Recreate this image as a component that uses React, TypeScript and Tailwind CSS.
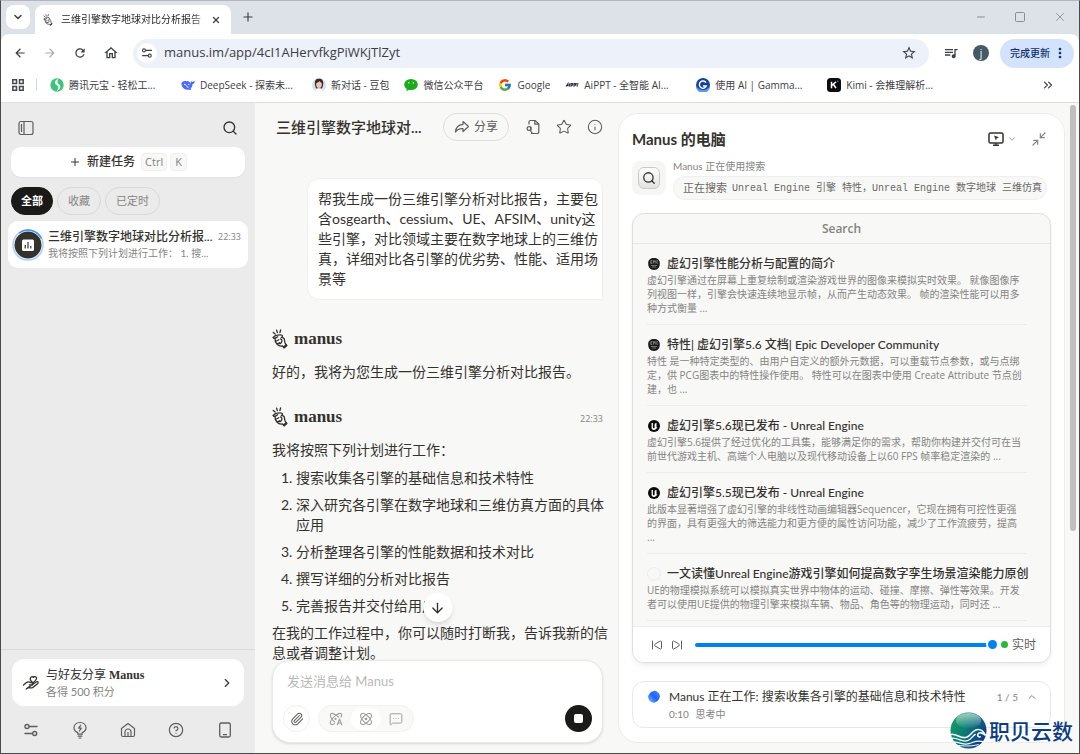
import { ReactNode, useState } from 'react';
import {
  ArrowDown,
  ChevronDown,
  ChevronRight,
  ChevronUp,
  ChevronsRight,
  CircleHelp,
  Info,
  MessageSquareMore,
  Minimize2,
  Minus,
  Paperclip,
  Plus,
  Search,
  SkipBack,
  SkipForward,
  Square,
  Star,
  X
} from 'lucide-react';
import {
  MdArrowBack,
  MdArrowForward,
  MdMoreVert,
  MdOutlineHome,
  MdQueueMusic,
  MdRefresh,
  MdStarBorder
} from 'react-icons/md';
import { FcGoogle } from 'react-icons/fc';

interface Bookmark {
  label: string;
  icon: ReactNode;
  long?: boolean;
}

interface Result {
  title: string;
  body: string[];
  icon: ReactNode;
}

function ManusHand({ size }: { size: string }) {
  return (
    <svg
      viewBox="0 0 16 20"
      className={size}
      fill="none"
      stroke="currentColor"
      strokeWidth="1.3"
      strokeLinecap="round"
      strokeLinejoin="round"
    >
      <path d="M1.2 3.4l2 1.6M4.6 1.2l.8 2.4M8.6 1l-.7 2.5" />
      <path d="M1.2 8.4c1-1.2 2.6-2 4.2-2.2 1.8-.3 3.6-.5 4.6.1 1 .8.4 1.8-.6 2 1.6 0 2.8.8 3 2.2.1 1.7.4 3.2 1 4.3l1.5 1.6-2.6 2.4-1.7-1.8c-2 .3-4.2-.2-5.4-1.6-1.7-1.9-2.4-4.4-2.2-6.2" />
      <path d="M1.3 8.500c.2 1 1.3 1.200 2.200.6l2.200-1.300M3.600 12c1 .4 2-.5 3.200-1.300M5 14.600c.9.3 1.600-.2 2.600-.9M8.600 9.800c1.500.6 1.700 2.600.6 3.900-.8.9-2 1.200-3 .7" />
      <path d="M11.800 18.300l2.300-2.200" strokeWidth="2" />
    </svg>
  );
}

function PanelIcon() {
  return (
    <svg viewBox="0 0 16 16" className="size-4" fill="none" stroke="currentColor" strokeWidth="1.2">
      <rect x="1" y="1.5" width="14" height="13" rx="2" />
      <path d="M6 1.5v13M3.5 4v8" />
    </svg>
  );
}

function ShareIcon() {
  return (
    <svg viewBox="0 0 16 16" className="size-4" fill="none" stroke="currentColor" strokeWidth="1.2" strokeLinejoin="round">
      <path d="M9 2.500l5.500 5-5.500 5V9.700C5.500 9.500 3.200 10.600 1.500 13c.2-4.500 2.900-7.200 7.500-7.700z" />
    </svg>
  );
}

function FileSearchIcon() {
  return (
    <svg viewBox="0 0 16 16" className="size-4" fill="none" stroke="currentColor" strokeWidth="1.2" strokeLinejoin="round">
      <path d="M4 5.500V3a1.500 1.500 0 011.500-1.500H10L13.800 5v8a1.500 1.500 0 01-1.500 1.500H6" />
      <path d="M9.800 1.500v3.700h4" />
      <circle cx="4" cy="9.5" r="1.900" />
      <path d="M5.900 7.500v5.500M5.900 13.500h1.600" />
    </svg>
  );
}

function MonitorIcon() {
  return (
    <svg viewBox="0 0 18 16" className="h-4 w-[18px]" fill="none" stroke="currentColor" strokeWidth="1.5" strokeLinejoin="round">
      <rect x="2" y="2" width="14" height="10" rx="1.5" />
      <path d="M9 12v2M6 14.300h6" />
      <path d="M7 4.500l5 1.800-2.200.9-.9 2.200z" fill="currentColor" stroke="none" />
    </svg>
  );
}

function HandHeartIcon() {
  return (
    <svg viewBox="0 0 18 18" className="size-[18px]" fill="none" stroke="currentColor" strokeWidth="1.3" strokeLinejoin="round" strokeLinecap="round">
      <path d="M8.500 3.800c.8-1.500 2.300-1.300 2.900-.4.900-1.100 2.600-1 3.100.3.500 1.600-1 3-3.500 5C8.800 7.200 7.700 5.400 8.500 3.800z" />
      <path d="M1.500 11l3-2.500c1-.8 2.100-.8 3.200-.3l2.600 1c1 .5.700 1.900-.4 1.800l-2.600-.2M10.500 10.500l4-2.700c1.300-.7 2.300.6 1.300 1.600l-4.300 3.700c-.7.6-1.500.8-2.400.7l-3-.3-1.800 1.600z" />
    </svg>
  );
}

function SlidersIcon({ className }: { className: string }) {
  return (
    <svg viewBox="0 0 16 16" className={className} fill="none" stroke="currentColor" strokeWidth="1.4" strokeLinecap="round">
      <circle cx="4" cy="4.5" r="2" />
      <path d="M6.500 4.500H14M2 11.500h7" />
      <circle cx="11.7" cy="11.5" r="2" />
    </svg>
  );
}

function BulbIcon() {
  return (
    <svg viewBox="0 0 16 18" className="h-[18px] w-4" fill="none" stroke="currentColor" strokeWidth="1.2" strokeLinecap="round" strokeLinejoin="round">
      <path d="M5.800 13.200v-1.600C3.500 10.700 2 9 2 6.800 2 3.600 4.700 1.500 8 1.500s6 2.100 6 5.300c0 2.200-1.500 3.900-3.800 4.800v1.600z" />
      <path d="M8.600 4.300L6.700 7.200h2.600L7.400 10M6.200 15.200h3.600M7 17h2" />
    </svg>
  );
}

function HomeIcon() {
  return (
    <svg viewBox="0 0 16 16" className="size-4" fill="none" stroke="currentColor" strokeWidth="1.2" strokeLinejoin="round">
      <path d="M1.500 6.500L8 1.500l6.500 5V13a1.500 1.500 0 01-1.500 1.500H3A1.500 1.500 0 011.500 13z" />
      <path d="M5 14.500V10a3 3 0 016 0v4.500M8 10v4.500" />
    </svg>
  );
}

function TabletIcon() {
  return (
    <svg viewBox="0 0 16 16" className="size-4" fill="none" stroke="currentColor" strokeWidth="1.3" strokeLinecap="round">
      <rect x="2.7" y="1" width="10.6" height="14" rx="1.5" />
      <path d="M6.500 12.700h3" />
    </svg>
  );
}

function AtomIcon({ auto }: { auto?: boolean }) {
  return (
    <svg viewBox="0 0 16 16" className="size-3.5" fill="none" stroke="currentColor" strokeWidth="1.2" strokeLinecap="round" strokeLinejoin="round">
      {auto ? (
        <>
          <path d="M8 3.600C5.500 1.800 3 1.200 2 2.200s-.4 3.300 1.400 5.800M8 3.600c2.500-1.800 5-2.400 6-1.400.6.700.5 2.100-.2 3.600M3.400 8c-1.800 2.500-2.400 4.800-1.400 5.800.8.800 2.500.6 4.300-.5M3.400 8c1.200-1.700 2.800-3.300 4.600-4.400 1 .6 1.900 1.300 2.800 2.100M3.400 8c.8 1.200 1.800 2.400 3 3.400" />
          <circle cx="7.5" cy="7.8" r=".7" fill="currentColor" />
          <path d="M9.500 14.500l2.500-6.500 2.500 6.500M10.400 12.500h3.200" />
        </>
      ) : (
        <>
          <ellipse cx="8" cy="8" rx="3.8" ry="8" transform="rotate(45 8 8)" />
          <ellipse cx="8" cy="8" rx="3.8" ry="8" transform="rotate(-45 8 8)" />
          <circle cx="8" cy="8" r=".9" fill="currentColor" />
        </>
      )}
    </svg>
  );
}

function EpicIcon() {
  return (
    <svg viewBox="0 0 12 12" className="size-3">
      <path d="M6 0C9.500 0 11.700 1.500 11.800 5 12 9 10 12 6 12S0 9 .2 5C.3 1.500 2.500 0 6 0z" fill="#1c1c1c" />
      <path d="M2.800 2.500h1.600M2.800 2.500v3M2.800 4h1.300M2.800 5.500h1.600M5.500 5.500v-3h1v1.500h-1M7.700 2.500v3M9.800 2.700H8.900v2.600h.9M3 7.500h6M4 9h4" stroke="#aaa" strokeWidth=".6" fill="none" />
    </svg>
  );
}

function UnrealIcon() {
  return (
    <svg viewBox="0 0 12 12" className="size-3">
      <circle cx="6" cy="6" r="6" fill="#0b0b0b" />
      <path d="M3 3.700L4.900 2.800v4.500c0 .7.300 1 .8 1 .5 0 .9-.3.9-.9V3.800l1.900-1v4.800l.9-.3C8.900 8.800 7.500 9.900 5.900 9.900 4.300 9.900 3.600 9 3.600 7.700V4.200z" fill="#fff" />
    </svg>
  );
}

const bookmarks: Bookmark[] = [
  {
    label: '腾讯元宝 - 轻松工...',
    long: true,
    icon: (
      <svg viewBox="0 0 14 14" className="size-3.5">
        <circle cx="7" cy="7" r="6.7" fill="#3cc57a" />
        <path d="M8.500.500C4 3 4.200 5.500 7 7.300c2 1.300 1.600 3.500-.5 6.200 4.200-2.500 5-5.700 2.500-7.300C7 5 7 3 8.500.500z" fill="#fff" />
      </svg>
    )
  },
  {
    label: 'DeepSeek - 探索未...',
    long: true,
    icon: (
      <svg viewBox="0 0 14 14" className="size-3.5">
        <path d="M.5 5C1.500 3 3.500 2.500 5.500 3.200L7 3c1 .6 2 1.200 2.500 2.400.6-.6.2-1.700.4-2.700.8 1 1.400 1.300 2.100 1.100.6-.2 1-.7 1.700-.7 0 1.800-.7 2.700-2.200 3.100-.2 2-1 3.600-2.100 4.500l1 1c-1 .4-2 .2-2.700-.2-3.500 1.100-7.700-2-7.200-6.500z" fill="#4d6bfe" />
        <path d="M3 6.200c2 0 3 2.600 4.400 3.800M7.200 6.300l1.200.5" stroke="#fff" strokeWidth="1" fill="none" />
      </svg>
    )
  },
  {
    label: '新对话 - 豆包',
    icon: (
      <svg viewBox="0 0 14 14" className="size-3.5">
        <circle cx="7" cy="7" r="7" fill="#cfe3f7" />
        <path d="M3 7C2.200 2.500 4 .800 7 .800s5 1.700 4 6.700l-1 3H4z" fill="#3b2a2a" />
        <ellipse cx="7" cy="6.5" rx="2.8" ry="3.5" fill="#f3c6a8" />
        <path d="M3.500 13c.3-2 1.500-2.700 3.500-2.700s3.200.7 3.500 2.700Q7 15 3.500 13z" fill="#fff" />
        <path d="M4 4.800C5.500 4.800 7 4 7.500 3c.6 1 1.500 1.600 2.500 1.800L9.500 2h-5z" fill="#3b2a2a" />
      </svg>
    )
  },
  {
    label: '微信公众平台',
    icon: (
      <svg viewBox="0 0 14 14" className="size-3.5">
        <ellipse cx="7" cy="6.5" rx="6.8" ry="5.6" fill="#1aad19" />
        <path d="M3 10.500l-.8 2.800 3.300-1.800z" fill="#1aad19" />
        <circle cx="4.7" cy="4.8" r=".8" fill="#fff" />
        <circle cx="9.3" cy="4.8" r=".8" fill="#fff" />
      </svg>
    )
  },
  { label: 'Google', icon: <FcGoogle className="size-3.5" /> },
  {
    label: 'AiPPT - 全智能 AI...',
    long: true,
    icon: (
      <svg viewBox="0 0 14 14" className="size-3.5" fill="none" stroke="#33304a" strokeWidth="1.1">
        <path d="M1 8.500l2-3v3M1.800 7.500h1M4.500 5.500v3M6 8.700V5.500h1.500v1.600H6M9 8.700V5.500h1.500v1.600H9M11 5.700h2.500M12.200 5.700v3" />
      </svg>
    )
  },
  {
    label: '使用 AI | Gamma...',
    long: true,
    icon: (
      <svg viewBox="0 0 14 14" className="size-3.5">
        <circle cx="7" cy="7" r="7" fill="#14429c" />
        <path d="M0 8a7 7 0 0014 0q-3 4-7 4T0 8z" fill="#5b9bea" />
        <path d="M10 4.700A3.600 3.600 0 1010.300 8H7" stroke="#fff" strokeWidth="1.4" fill="none" />
      </svg>
    )
  },
  {
    label: 'Kimi - 会推理解析...',
    long: true,
    icon: (
      <svg viewBox="0 0 14 14" className="size-3.5">
        <rect width="14" height="14" rx="3.5" fill="#0c0c0c" />
        <path d="M4.500 3.800v6.400M9 3.800L5 7.200M6.500 6.500L9 10.200" stroke="#fff" strokeWidth="1.5" fill="none" />
        <circle cx="10.8" cy="3.3" r=".8" fill="#2b7fff" />
      </svg>
    )
  }
];

const filters = ['全部', '收藏', '已定时'];

const steps = [
  ['搜索收集各引擎的基础信息和技术特性'],
  ['深入研究各引擎在数字地球和三维仿真方面的具体', '应用'],
  ['分析整理各引擎的性能数据和技术对比'],
  ['撰写详细的分析对比报告'],
  ['完善报告并交付给用户']
];

const results: Result[] = [
  {
    title: '虚幻引擎性能分析与配置的简介',
    body: [
      '虚幻引擎通过在屏幕上重复绘制或渲染游戏世界的图像来模拟实时效果。 就像图像序',
      '列视图一样，引擎会快速连续地显示帧，从而产生动态效果。 帧的渲染性能可以用多',
      '种方式衡量 ...'
    ],
    icon: <EpicIcon />
  },
  {
    title: '特性| 虚幻引擎5.6 文档| Epic Developer Community',
    body: [
      '特性 是一种特定类型的、由用户自定义的额外元数据，可以重载节点参数，或与点绑',
      '定，供 PCG图表中的特性操作使用。 特性可以在图表中使用 Create Attribute 节点创',
      '建，也 ...'
    ],
    icon: <EpicIcon />
  },
  {
    title: '虚幻引擎5.6现已发布 - Unreal Engine',
    body: [
      '虚幻引擎5.6提供了经过优化的工具集，能够满足你的需求，帮助你构建并交付可在当',
      '前世代游戏主机、高端个人电脑以及现代移动设备上以60 FPS 帧率稳定渲染的 ...'
    ],
    icon: <UnrealIcon />
  },
  {
    title: '虚幻引擎5.5现已发布 - Unreal Engine',
    body: [
      '此版本显著增强了虚幻引擎的非线性动画编辑器Sequencer，它现在拥有可控性更强',
      '的界面，具有更强大的筛选能力和更方便的属性访问功能，减少了工作流疲劳，提高',
      '...'
    ],
    icon: <UnrealIcon />
  },
  {
    title: '一文读懂Unreal Engine游戏引擎如何提高数字孪生场景渲染能力原创',
    body: [
      'UE的物理模拟系统可以模拟真实世界中物体的运动、碰撞、摩擦、弹性等效果。开发',
      '者可以使用UE提供的物理引擎来模拟车辆、物品、角色等的物理运动，同时还 ...'
    ],
    icon: <span className="size-3.5 rounded-full border border-[#ececf2]" />
  }
];

function Lines({ lines }: { lines: string[] }) {
  return (
    <>
      {lines.map(line => (
        <span key={line} className="block whitespace-nowrap">
          {line}
        </span>
      ))}
    </>
  );
}

function BrowserBar() {
  return (
    <header className="shrink-0 border-b border-[#dedede] bg-[#dde1e8] font-[Open_Sans,Noto_Sans_CJK_SC,sans-serif] text-[#3c4043]">
      <div className="flex h-[33px] items-end">
        <button aria-label="搜索标签页" className="mb-[5px] ml-[5px] flex size-6 items-center justify-center rounded-lg bg-white">
          <ChevronDown className="size-3" strokeWidth={3} />
        </button>
        <div className="ml-[5px] flex h-[29px] w-[196px] items-center rounded-t-lg bg-white px-2">
          <ManusHand size="mr-2 h-3 w-2.5" />
          <span className="flex-1 bg-linear-to-r from-[#1f1f1f] from-90% to-[#bbbbbb] bg-clip-text text-[10px] whitespace-nowrap text-transparent">
            三维引擎数字地球对比分析报告
          </span>
          <button aria-label="关闭标签页" className="ml-1 p-0.5">
            <X className="size-2.5" strokeWidth={3} />
          </button>
        </div>
        <button aria-label="新标签页" className="mb-2.5 ml-2.5">
          <Plus className="size-3.5" strokeWidth={2} />
        </button>
        <div className="mr-3 mb-2.5 ml-auto flex items-center gap-[27px] text-[#8a8d92]">
          <button aria-label="最小化"><Minus className="size-3" strokeWidth={2} /></button>
          <button aria-label="最大化"><Square className="size-3" strokeWidth={2} /></button>
          <button aria-label="关闭"><X className="size-3.5" strokeWidth={1.5} /></button>
        </div>
      </div>
      <div className="flex h-[38px] items-center rounded-t-lg bg-white pr-[5px] pl-3">
        <div className="flex items-center gap-4">
          <button aria-label="后退"><MdArrowBack className="size-3.5" /></button>
          <button aria-label="前进"><MdArrowForward className="size-3.5 text-[#a9acb0]" /></button>
          <button aria-label="刷新"><MdRefresh className="size-3.5" /></button>
          <button aria-label="主页"><MdOutlineHome className="size-4" /></button>
        </div>
        <div className="mr-3.5 ml-3.5 flex h-[29px] flex-1 items-center rounded-full bg-[#ecf1fa] pr-3 pl-1">
          <span className="flex size-5 items-center justify-center rounded-full bg-white">
            <SlidersIcon className="size-3" />
          </span>
          <input
            aria-label="地址栏"
            defaultValue="manus.im/app/4cI1AHervfkgPiWKjTlZyt"
            className="ml-[7px] min-w-0 flex-1 bg-transparent text-[13px] outline-none"
          />
          <button aria-label="收藏此页"><MdStarBorder className="size-4" /></button>
        </div>
        <button aria-label="媒体控件"><MdQueueMusic className="size-4" /></button>
        <span className="mr-[11px] ml-3.5 flex size-4 items-center justify-center rounded-full bg-[#455a64] text-[10px] leading-none text-white">j</span>
        <button className="flex h-[29px] items-center rounded-full bg-[#d3e3fd] pr-1.5 pl-2.5 text-[10px] font-medium text-[#10306e]">
          完成更新
          <MdMoreVert className="ml-0.5 size-4" />
        </button>
      </div>
      <nav className="flex h-[30px] items-center bg-white pr-6 pb-1 pl-[11px] text-[10px]">
        <svg viewBox="0 0 12 12" className="size-3" fill="none" stroke="#45484c" strokeWidth="1.5">
          <path d="M.8.800h3.700v3.700H.8zM7.500.800h3.700v3.700H7.500zM.8 7.500h3.700v3.700H.8zM7.500 7.500h3.700v3.700H7.500z" />
        </svg>
        <span className="mr-[13px] ml-3 h-3 w-px bg-[#c7d7f3]" />
        <div className="flex flex-1 gap-[15px] overflow-hidden">
          {bookmarks.map(item => (
            <a
              key={item.label}
              href="#"
              className={`flex shrink-0 items-center gap-[5px] whitespace-nowrap ${item.long ? 'w-[116px]' : ''}`}
            >
              <span className="shrink-0">{item.icon}</span>
              {item.label}
            </a>
          ))}
        </div>
        <button aria-label="更多书签"><ChevronsRight className="size-3.5" /></button>
      </nav>
    </header>
  );
}

function Sidebar() {
  const [active, setActive] = useState(filters[0]);

  return (
    <aside className="flex w-[254px] shrink-0 flex-col bg-[#ebebeb]">
      <div className="flex items-center justify-between px-[17px] pt-[17px] pb-[11px] text-[#5e5e5b]">
        <button aria-label="收起侧栏"><PanelIcon /></button>
        <button aria-label="搜索" className="text-[#34322d]"><Search className="size-4" strokeWidth={2} /></button>
      </div>
      <button className="mx-2.5 flex h-[30px] items-center justify-center rounded-[10px] bg-white text-xs font-medium text-[#34322d] shadow-xs">
        <Plus className="mr-1.5 size-3" strokeWidth={2} />
        新建任务
        <kbd className="ml-1.5 rounded-sm border border-[#efefef] bg-[#f8f8f7] px-[3px] font-[Open_Sans] text-[11px] leading-4 text-[#858481]">Ctrl</kbd>
        <kbd className="ml-[3px] rounded-sm border border-[#efefef] bg-[#f8f8f7] px-1 font-[Open_Sans] text-[11px] leading-4 text-[#858481]">K</kbd>
      </button>
      <div className="mt-2.5 ml-2.5 flex gap-1">
        {filters.map(filter => (
          <button
            key={filter}
            onClick={() => setActive(filter)}
            className={
              filter === active
                ? 'h-7 rounded-full border border-[#1a1a19] bg-[#1a1a19] px-[9px] text-[11px] font-semibold text-white'
                : 'h-7 rounded-full border border-[#d9d9d8] px-2.5 text-[11px] text-[#858481]'
            }
          >
            {filter}
          </button>
        ))}
      </div>
      <a href="#" className="mx-[7px] mt-1.5 flex h-[47px] items-center rounded-[10px] bg-white pr-[7px] pl-1">
        <svg viewBox="0 0 32 32" className="size-8 shrink-0">
          <circle cx="16" cy="16" r="15" fill="none" stroke="#a9d0fa" strokeWidth="1.5" />
          <path d="M7 4a15 15 0 0122.500 5.500" fill="none" stroke="#3d95f5" strokeWidth="1.5" />
          <circle cx="16" cy="16" r="13.5" fill="#34322d" />
          <rect x="10" y="10.5" width="12" height="11.5" rx="1.5" fill="#fff" />
          <path d="M13.200 16v3.500M16 13v6.500M18.800 17v2.500" stroke="#34322d" strokeWidth="1.2" />
        </svg>
        <div className="ml-1 min-w-0 flex-1">
          <div className="flex items-center justify-between">
            <span className="text-xs font-medium whitespace-nowrap text-[#34322d]">三维引擎数字地球对比分析报...</span>
            <span className="font-[Open_Sans] text-[9px] text-[#858481]">22:33</span>
          </div>
          <p className="text-[10px] leading-4 whitespace-nowrap text-[#858481]">我将按照下列计划进行工作： 1. 搜...</p>
        </div>
      </a>
      <div className="mt-auto border-t border-[#dcdcdb] pt-[9px]">
        <a href="#" className="mx-[11px] flex h-[47px] items-center rounded-xl bg-white px-2.5 text-[#34322d]">
          <HandHeartIcon />
          <div className="ml-1.5 flex-1">
            <p className="font-[Liberation_Serif,Noto_Sans_CJK_SC,serif] text-xs leading-[18px]">
              与好友分享 <b>Manus</b>
            </p>
            <p className="text-[11px] leading-4 text-[#858481]">各得 500 积分</p>
          </div>
          <ChevronRight className="size-3.5" strokeWidth={2} />
        </a>
        <div className="flex h-[47px] items-center px-1.5 text-[#5e5e5b]">
          <button aria-label="设置" className="flex flex-1 justify-center"><SlidersIcon className="size-4" /></button>
          <button aria-label="知识" className="flex flex-1 justify-center"><BulbIcon /></button>
          <button aria-label="主页" className="flex flex-1 justify-center"><HomeIcon /></button>
          <button aria-label="帮助" className="flex flex-1 justify-center"><CircleHelp className="size-4" strokeWidth={1.8} /></button>
          <button aria-label="移动端" className="flex flex-1 justify-center"><TabletIcon /></button>
        </div>
      </div>
    </aside>
  );
}

function ManusName({ time }: { time?: string }) {
  return (
    <div className="flex h-5 items-center text-[#34322d]">
      <ManusHand size="h-5 w-4" />
      <span className="ml-1.5 font-[Liberation_Serif,serif] text-[17px] leading-5 font-bold">manus</span>
      {time && <span className="mt-1 ml-auto font-[Open_Sans] text-[9px] text-[#858481]">{time}</span>}
    </div>
  );
}

function Chat() {
  return (
    <main className="flex min-w-0 flex-1 flex-col pr-[15px] pl-[17px] text-[#34322d]">
      <div className="mt-2.5 ml-1 flex h-7 shrink-0 items-center">
        <h1 className="text-[15px] font-medium whitespace-nowrap">三维引擎数字地球对...</h1>
        <button className="ml-auto flex h-7 items-center gap-1 rounded-full border border-[#dededc] px-2.5 text-xs text-[#5e5e5b]">
          <ShareIcon />
          分享
        </button>
        <div className="ml-4 flex gap-[15px] text-[#5e5e5b]">
          <button aria-label="文件"><FileSearchIcon /></button>
          <button aria-label="收藏"><Star className="size-4" strokeWidth={1.6} /></button>
          <button aria-label="详情"><Info className="size-4" strokeWidth={1.6} /></button>
        </div>
      </div>
      <div className="relative flex min-h-0 flex-1 flex-col">
        <div className="min-h-0 flex-1 overflow-clip text-sm leading-5 [overflow-clip-margin:8px]">
          <div className="mt-[37px] ml-auto w-fit rounded-xl rounded-br-none border border-[#f0f0ee] bg-white py-2.5 pr-1 pl-2.5">
            <Lines
              lines={[
                '帮我生成一份三维引擎分析对比报告，主要包',
                '含osgearth、cessium、UE、AFSIM、unity这',
                '些引擎，对比领域主要在数字地球上的三维仿',
                '真，详细对比各引擎的优劣势、性能、适用场',
                '景等'
              ]}
            />
          </div>
          <div className="mt-[29px]"><ManusName /></div>
          <p className="mt-[13px]">好的，我将为您生成一份三维引擎分析对比报告。</p>
          <div className="mt-[25px]"><ManusName time="22:33" /></div>
          <p className="mt-[13px]">我将按照下列计划进行工作：</p>
          <ol className="mt-2 flex list-decimal flex-col gap-[7px] pl-6">
            {steps.map(step => (
              <li key={step[0]}><Lines lines={step} /></li>
            ))}
          </ol>
          <div className="mt-[7px]">
            <Lines lines={['在我的工作过程中，你可以随时打断我，告诉我新的信', '息或者调整计划。']} />
          </div>
        </div>
        <button
          aria-label="滚动到底部"
          className="absolute bottom-[38px] left-1/2 flex size-[29px] -translate-x-1/2 items-center justify-center rounded-full bg-white shadow-md"
        >
          <ArrowDown className="size-4" strokeWidth={2} />
        </button>
      </div>
      <form className="relative mb-2.5 shrink-0 rounded-[18px] border border-[#e8e8e6] bg-white p-2.5 shadow-sm">
        <input
          aria-label="消息"
          placeholder="发送消息给 Manus"
          className="block w-full pl-1 text-[13px] leading-5 outline-none placeholder:text-[#b9b9b7]"
        />
        <div className="mt-3.5 flex items-center text-[#9c9b98]">
          <button type="button" aria-label="添加附件" className="flex size-[27px] items-center justify-center rounded-full border border-[#efefed] text-[#5e5e5b]">
            <Paperclip className="size-3.5" strokeWidth={1.8} />
          </button>
          <div className="ml-2 flex h-[27px] items-center rounded-full border border-[#f1f1ef] bg-[#f9f9f8] px-0.5">
            <button type="button" aria-label="自适应" className="flex w-[30px] justify-center"><AtomIcon auto /></button>
            <button type="button" aria-label="智能体" className="flex h-[22px] w-[30px] items-center justify-center rounded-full bg-white"><AtomIcon /></button>
            <button type="button" aria-label="聊天" className="flex w-[30px] justify-center"><MessageSquareMore className="size-3.5" strokeWidth={1.6} /></button>
          </div>
          <button type="button" aria-label="停止" className="ml-auto flex size-[27px] items-center justify-center rounded-full bg-[#1a1a19]">
            <span className="size-[9px] rounded-xs bg-white" />
          </button>
        </div>
      </form>
    </main>
  );
}

function Computer() {
  const [position, setPosition] = useState(100);

  return (
    <section className="mt-2.5 mr-3.5 mb-2.5 flex w-[447px] shrink-0 flex-col rounded-[20px] border border-[#ececea] bg-white px-[13px] pb-3.5 text-[#34322d]">
      <div className="mt-[13px] flex h-6 items-center">
        <h2 className="text-[15px] font-bold">Manus 的电脑</h2>
        <button aria-label="切换视图" className="ml-auto flex items-center gap-0.5">
          <MonitorIcon />
          <ChevronDown className="size-2.5 text-[#858481]" />
        </button>
        <button aria-label="缩小" className="mr-1 ml-3.5 text-[#858481]"><Minimize2 className="size-4" strokeWidth={1.8} /></button>
      </div>
      <div className="mt-2 flex">
        <span className="mt-0.5 flex size-[34px] shrink-0 items-center justify-center rounded-lg bg-[#f6f6f5]">
          <span className="flex size-[22px] items-center justify-center rounded-md border border-[#c9c9c7] bg-linear-to-b from-white to-[#e2e2e0]">
            <Search className="size-3.5" strokeWidth={2.2} />
          </span>
        </span>
        <div className="ml-[7px] text-[#6a6965]">
          <p className="text-[10px] leading-[14px] text-[#858481]">Manus 正在使用搜索</p>
          <div className="mt-[3px] flex h-6 w-[374px] items-center rounded-full border border-[#efefed] bg-[#f8f8f7] pl-[9px] whitespace-nowrap">
            <span className="text-[11px]">正在搜索</span>
            <code className="ml-[5px] font-[Liberation_Mono,Noto_Sans_CJK_SC,monospace] text-[10px]">
              Unreal Engine 引擎 特性，Unreal Engine 数字地球 三维仿真
            </code>
          </div>
        </div>
      </div>
      <div className="mt-[13px] flex min-h-0 flex-1 flex-col overflow-hidden rounded-xl border border-[#dededc] bg-[#f8f8f7] shadow-md shadow-black/5">
        <div className="flex h-[30px] shrink-0 items-center justify-center border-b border-[#e8e8e6] font-[Open_Sans] text-xs font-semibold text-[#858481]">
          Search
        </div>
        <ul className="min-h-0 flex-1 overflow-hidden pr-[23px] pl-3.5">
          {results.map(result => (
            <li key={result.title} className="border-b border-[#ececea] pt-2.5 pb-[9px]">
              <a href="#" className="flex h-[19px] items-center text-xs font-medium whitespace-nowrap">
                <span className="mr-1.5 flex size-3.5 shrink-0 items-center justify-center">{result.icon}</span>
                {result.title}
              </a>
              <p className="font-[Open_Sans,Noto_Sans_CJK_SC,sans-serif] text-[10px] leading-[14px] text-[#858481]">
                <Lines lines={result.body} />
              </p>
            </li>
          ))}
        </ul>
        <div className="flex h-9 shrink-0 items-center border-t border-[#ececea] bg-white pr-3.5 pl-[18px] text-[#5e5e5b]">
          <button aria-label="上一步"><SkipBack className="size-3" /></button>
          <button aria-label="下一步" className="mr-3 ml-2"><SkipForward className="size-3" /></button>
          <input
            type="range"
            aria-label="进度"
            value={position}
            onChange={event => setPosition(Number(event.target.value))}
            className="h-1 min-w-0 flex-1 appearance-none rounded-full bg-[#0081f2] [&::-webkit-slider-thumb]:size-[9px] [&::-webkit-slider-thumb]:appearance-none [&::-webkit-slider-thumb]:rounded-full [&::-webkit-slider-thumb]:bg-[#0081f2] [&::-webkit-slider-thumb]:ring-2 [&::-webkit-slider-thumb]:ring-white"
          />
          <span className="ml-1 size-[7px] rounded-full bg-[#25ba3b]" />
          <span className="ml-1 text-xs">实时</span>
        </div>
      </div>
      <div className="mt-[18px] flex h-[47px] shrink-0 rounded-xl border border-[#e8e8e6] pt-1.5 pr-3 pl-3.5">
        <svg viewBox="0 0 14 14" className="mt-0.5 size-3.5">
          <defs>
            <linearGradient id="pulse" x1="0" y1="1" x2="1" y2="0">
              <stop offset="0" stopColor="#8fc3ff" />
              <stop offset=".5" stopColor="#1b66ff" />
              <stop offset="1" stopColor="#4a8dff" />
            </linearGradient>
          </defs>
          <path d="M6.500.900q2-.6 4 1.200 2.500 1.500 2.500 4.400-.3 2-2.500 4.500-2.500 2.500-5 1.500Q2 11.500 1.200 8 .7 5.500 3 3 4.500 1.200 6.500.900z" fill="url(#pulse)" />
        </svg>
        <div className="ml-2 flex-1">
          <p className="text-xs leading-[18px]">Manus 正在工作: 搜索收集各引擎的基础信息和技术特性</p>
          <p className="text-[10px] leading-4 text-[#858481]">0:10 <span className="ml-1">思考中</span></p>
        </div>
        <span className="text-[10px] leading-[18px] text-[#858481]">1 / 5</span>
        <button aria-label="展开" className="ml-2 h-[18px] text-[#858481]"><ChevronUp className="size-3" /></button>
      </div>
    </section>
  );
}

function Watermark() {
  return (
    <div className="absolute right-1.5 bottom-1 flex items-center gap-0.5">
      <svg viewBox="0 0 38 38" className="size-[37px]">
        <defs>
          <linearGradient id="globe" x1="0" y1=".2" x2="1" y2=".8">
            <stop offset="0" stopColor="#12a05c" />
            <stop offset=".45" stopColor="#0c7a78" />
            <stop offset="1" stopColor="#0a2f8c" />
          </linearGradient>
          <linearGradient id="gloss" x1="0" y1="0" x2="0" y2="1">
            <stop offset="0" stopColor="#fff" stopOpacity=".6" />
            <stop offset="1" stopColor="#fff" stopOpacity="0" />
          </linearGradient>
        </defs>
        <circle cx="19" cy="19" r="18.5" fill="url(#globe)" />
        <ellipse cx="19" cy="9" rx="13" ry="8" fill="url(#gloss)" />
        <g fill="none" stroke="#fff" strokeLinecap="round">
          <path d="M1 23c6-1 10 5 16 3 5-1.700 6-8 12-8 4 0 6 3 7.500 6-3-3-7-3.500-8-1-.5 1.700.8 3 2.500 2.500" strokeWidth="1.6" />
          <path d="M2 27c6-1 10 4.500 16 2.500 4-1.400 5-5 8-6.500" strokeWidth="1.3" />
          <path d="M4.500 31c5-.5 9 3.500 15 1.500s8-4 15-2" strokeWidth="1.3" />
          <path d="M9 34.500c5 0 10 1.500 20-1" strokeWidth="1" />
        </g>
      </svg>
      <span className="text-[21px] leading-none font-medium text-[#0b3c86]">职贝云数</span>
    </div>
  );
}

export default function App() {
  return (
    <div className="relative flex h-screen min-h-[600px] flex-col overflow-hidden border border-[#4a4a4a] border-t-[#b4b7bd] font-[Lato,Noto_Sans_CJK_SC,sans-serif]">
      <BrowserBar />
      <div className="flex min-h-0 flex-1 bg-[#f8f8f7]">
        <Sidebar />
        <Chat />
        <Computer />
      </div>
      <span className="absolute top-[104px] right-[3px] h-[426px] w-1.5 rounded-full bg-[#bfbfbf]" />
      <Watermark />
    </div>
  );
}
